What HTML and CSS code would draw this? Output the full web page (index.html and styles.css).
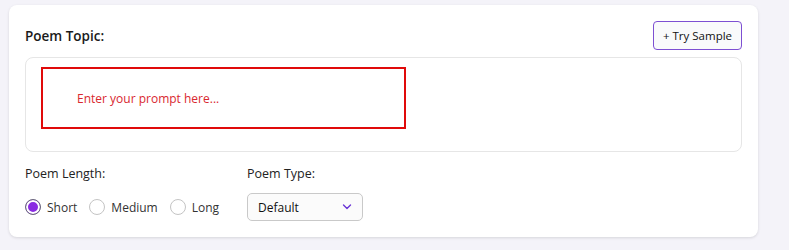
FILE: index.html
```html
<!DOCTYPE html>
<html lang="en">
<head>
    <meta charset="UTF-8">
    <meta name="viewport" content="width=device-width, initial-scale=1.0">
    <title>Poem Generator</title>
    <link rel="stylesheet" href="styles.css">
</head>
<body>
    <div class="card">
        <div class="card-header">
            <label class="topic-label" for="prompt">Poem Topic:</label>
            <button type="button" class="sample-btn">+ Try Sample</button>
        </div>

        <div class="prompt-box">
            <div class="prompt-input" id="prompt">Enter your prompt here...</div>
        </div>

        <div class="options">
            <div class="option-group length-group">
                <div class="option-label">Poem Length:</div>
                <div class="radio-row">
                    <label class="radio-item">
                        <input type="radio" name="length" value="short" checked>
                        <span>Short</span>
                    </label>
                    <label class="radio-item">
                        <input type="radio" name="length" value="medium">
                        <span>Medium</span>
                    </label>
                    <label class="radio-item">
                        <input type="radio" name="length" value="long">
                        <span>Long</span>
                    </label>
                </div>
            </div>

            <div class="option-group">
                <div class="option-label">Poem Type:</div>
                <div class="select-box">
                    <span>Default</span>
                    <svg width="10" height="6" viewBox="0 0 10 6">
                        <path d="M1.5 1 L5 4.5 L8.5 1" fill="none" stroke="#6a35d6" stroke-width="1.4" stroke-linecap="round" stroke-linejoin="round"/>
                    </svg>
                </div>
            </div>
        </div>
    </div>
</body>
</html>
```

FILE: styles.css
```css
body {
    margin: 0;
    padding: 5px 31px 13px 9px;
    background-color: #f4f3f9;
    font-family: "Open Sans", "Noto Sans", Arial, sans-serif;
    color: #1f1f1f;
}
.card {
    background-color: #fff;
    border-radius: 8px;
    padding: 16px 16px 16px 16px;
    box-shadow: 0 1px 3px rgba(0, 0, 0, 0.12);
}
.card-header {
    display: flex;
    justify-content: space-between;
    align-items: center;
}
.topic-label {
    font-size: 13.5px;
    font-weight: 600;
    color: #1a1a1a;
}
.sample-btn {
    height: 29px;
    width: 89px;
    padding: 0;
    border: 1px solid #7d4fd2;
    border-radius: 4px;
    background-color: #f9fafb;
    font-family: inherit;
    font-size: 11.5px;
    color: #111;
    cursor: pointer;
}
.prompt-box {
    margin-top: 7px;
    height: 75px;
    border: 1px solid #e6e6e6;
    border-radius: 8px;
    padding: 9px 15px;
}
.prompt-input {
    width: 327px;
    height: 58px;
    border: 2px solid #e00a0a;
    padding: 0 0 0 34px;
    display: flex;
    align-items: center;
    font-size: 12px;
    color: #d9282f;
}
.options {
    display: flex;
    margin-top: 12px;
}
.length-group {
    width: 222px;
}
.option-label {
    font-size: 12.5px;
    line-height: 20px;
    color: #222;
}
.radio-row {
    display: flex;
    align-items: center;
    gap: 12px;
    height: 28px;
    margin-top: 9px;
}
.radio-item {
    display: flex;
    align-items: center;
    gap: 6px;
    font-size: 12px;
    color: #333;
}
.radio-item input {
    appearance: none;
    margin: 0;
    width: 16px;
    height: 16px;
    border: 1px solid #c4c4c4;
    border-radius: 50%;
    background-color: #fff;
}
.radio-item input:checked {
    border-color: #6b6b7a;
    background-color: #8a2be2;
    box-shadow: inset 0 0 0 2px #fff;
}
.select-box {
    margin-top: 9px;
    width: 116px;
    height: 28px;
    box-sizing: border-box;
    border: 1px solid #c9c9c9;
    border-radius: 5px;
    background-color: #fbfbfb;
    display: flex;
    align-items: center;
    justify-content: space-between;
    padding: 0 10px 0 10px;
    font-size: 12px;
    color: #111;
}
```
